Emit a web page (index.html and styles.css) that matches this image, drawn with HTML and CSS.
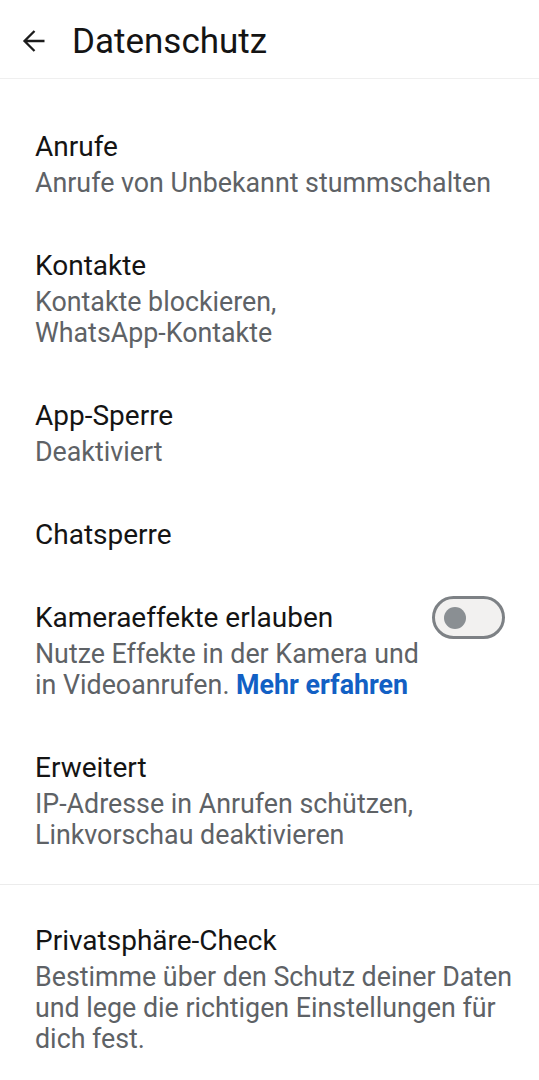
FILE: index.html
```html
<!DOCTYPE html>
<html lang="de">
<head>
  <meta charset="UTF-8" />
  <meta name="viewport" content="width=device-width, initial-scale=1.0"/>
  <title>Datenschutz</title>
  <link rel="stylesheet" href="styles.css">
</head>
<body>
  <header class="topbar">
    <button class="back" type="button" aria-label="Zurück">
      <svg width="24" height="24" viewBox="0 0 24 24">
        <path d="M22.5 12H2.5M12.5 2L2.5 12l10 10" fill="none" stroke="#1c1c1c" stroke-width="2.3" stroke-linecap="butt" stroke-linejoin="miter"/>
      </svg>
    </button>
    <h1>Datenschutz</h1>
  </header>

  <main>
    <section class="group">
      <div class="item">
        <div class="title">Anrufe</div>
        <div class="sub">Anrufe von Unbekannt stummschalten</div>
      </div>
      <div class="item">
        <div class="title">Kontakte</div>
        <div class="sub">Kontakte blockieren,<br>WhatsApp-Kontakte</div>
      </div>
      <div class="item">
        <div class="title">App-Sperre</div>
        <div class="sub">Deaktiviert</div>
      </div>
      <div class="item">
        <div class="title">Chatsperre</div>
      </div>
      <div class="item with-toggle">
        <div class="text">
          <div class="title">Kameraeffekte erlauben</div>
          <div class="sub">Nutze Effekte in der Kamera und<br>in Videoanrufen. <a href="#" class="link">Mehr erfahren</a></div>
        </div>
        <span class="toggle"><span class="knob"></span></span>
      </div>
      <div class="item">
        <div class="title">Erweitert</div>
        <div class="sub">IP-Adresse in Anrufen schützen,<br>Linkvorschau deaktivieren</div>
      </div>
    </section>

    <section class="group">
      <div class="item">
        <div class="title">Privatsphäre-Check</div>
        <div class="sub">Bestimme über den Schutz deiner Daten und lege die richtigen Einstellungen für dich fest.</div>
      </div>
    </section>
  </main>
</body>
</html>
```

FILE: styles.css
```css
body {
  font-family: Roboto, 'Noto Sans', sans-serif;
  background: #fff;
  color: #141414;
  margin: 0;
  padding: 0;
}

.topbar {
  height: 79px;
  display: flex;
  align-items: center;
  border-bottom: 1px solid #efefef;
  box-sizing: border-box;
}

.back {
  border: none;
  background: none;
  padding: 0;
  margin: 3px 0 0 22px;
  width: 24px;
  height: 24px;
  display: flex;
}

.topbar h1 {
  margin: 5px 0 0 26px;
  font-size: 35px;
  font-weight: 400;
  color: #141414;
}

main {
  padding-top: 3px;
}

.group {
  padding: 24px 0 7px;
}

.group + .group {
  border-top: 1px solid #ececec;
  padding-top: 15px;
}

.item {
  padding: 24px 16px 26px 35px;
}

.title {
  font-size: 28px;
  line-height: 33px;
  color: #141414;
}

.sub {
  margin-top: 5px;
  font-size: 26.8px;
  line-height: 31px;
  color: #5e6266;
}

.link {
  color: #1260c4;
  font-weight: 700;
  text-decoration: none;
}

.with-toggle {
  display: flex;
  align-items: flex-start;
  gap: 6px;
  padding-right: 34px;
}

.with-toggle .text {
  flex: 1;
}

.toggle {
  flex: none;
  margin-top: -5px;
  width: 73px;
  height: 43px;
  box-sizing: border-box;
  border: 3px solid #7d8185;
  border-radius: 22px;
  background: #f2f1f0;
  display: flex;
  align-items: center;
  padding-left: 9px;
}

.knob {
  width: 22px;
  height: 22px;
  border-radius: 50%;
  background: #8a8f93;
}
```
